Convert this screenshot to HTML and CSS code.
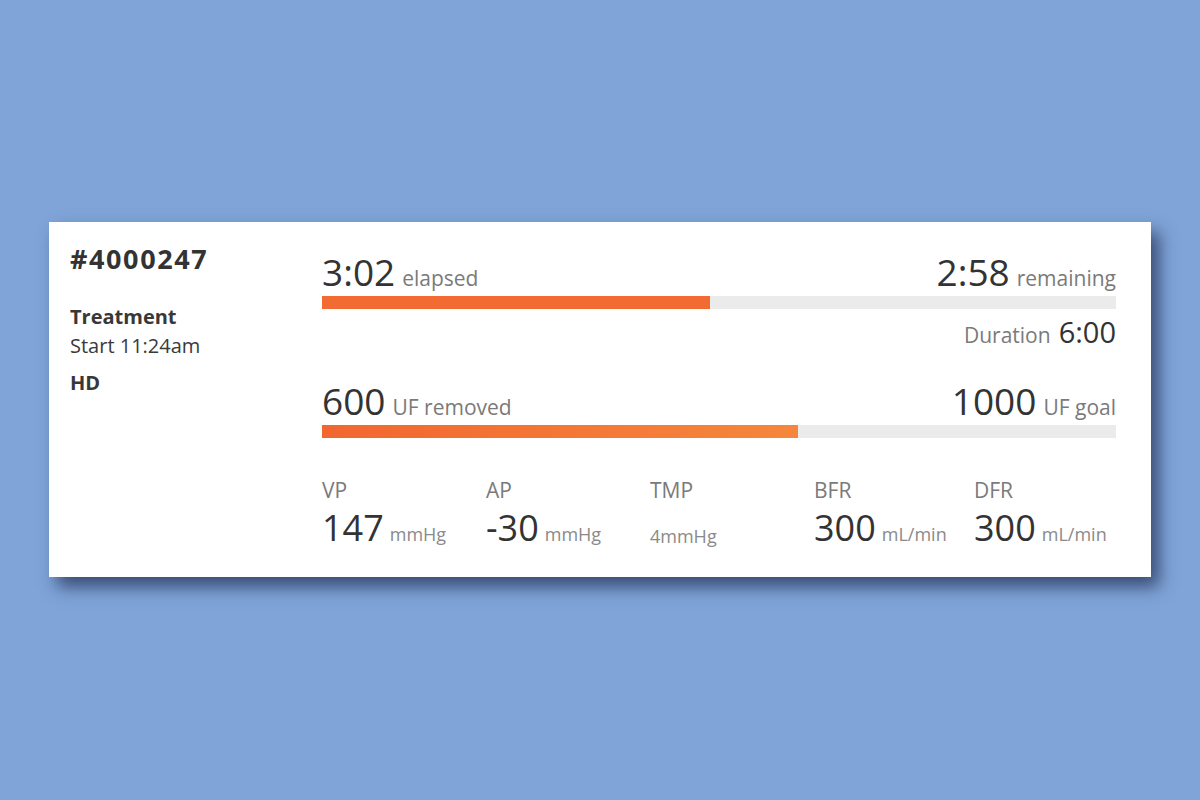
FILE: index.html
```html
<!DOCTYPE html>
<html>
<head>
<meta charset="utf-8">
<link rel="stylesheet" href="styles.css">
</head>
<body>
<div class="card">
  <div class="left">
    <div class="id">#4000247</div>
    <div class="treat">Treatment</div>
    <div class="start">Start 11:24am</div>
    <div class="mode">HD</div>
  </div>
  <div class="right">
    <div class="row">
      <div><span class="big">3:02</span><span class="lbl">elapsed</span></div>
      <div><span class="big">2:58</span><span class="lbl">remaining</span></div>
    </div>
    <div class="track"><div class="fill" style="width:48.9%"></div></div>
    <div class="dur"><span class="lbl">Duration</span><span class="mid">6:00</span></div>
    <div class="row row2">
      <div><span class="big">600</span><span class="lbl">UF removed</span></div>
      <div><span class="big">1000</span><span class="lbl">UF goal</span></div>
    </div>
    <div class="track"><div class="fill fill2" style="width:60%"></div></div>
    <div class="stats">
      <div class="stat s1"><div class="slabel">VP</div><div class="sval"><span class="big">147</span><span class="unit">mmHg</span></div></div>
      <div class="stat s2"><div class="slabel">AP</div><div class="sval"><span class="big">-30</span><span class="unit">mmHg</span></div></div>
      <div class="stat s3"><div class="slabel">TMP</div><div class="sval"><span class="unit low">4mmHg</span></div></div>
      <div class="stat s4"><div class="slabel">BFR</div><div class="sval"><span class="big">300</span><span class="unit">mL/min</span></div></div>
      <div class="stat s5"><div class="slabel">DFR</div><div class="sval"><span class="big">300</span><span class="unit">mL/min</span></div></div>
    </div>
  </div>
</div>
</body>
</html>
```
FILE: styles.css
```css
html, body { margin: 0; padding: 0; }
body {
  width: 1200px;
  height: 800px;
  background: #80a4d8;
  font-family: "Open Sans", "Lato", sans-serif;
  color: #333;
  padding: 222px 0 0 49px;
  box-sizing: border-box;
  overflow: hidden;
}
.card {
  width: 1102px;
  height: 355px;
  background: #fff;
  box-sizing: border-box;
  display: flex;
  padding: 0 35px 0 21px;
  box-shadow: 8px 10px 16px rgba(25, 40, 75, 0.7);
}
.left { width: 252px; flex: none; padding-top: 21px; }
.id { font-size: 27px; font-weight: 700; color: #333; line-height: 32px; letter-spacing: 1.6px; }
.treat { font-size: 20px; font-weight: 700; margin-top: 30px; line-height: 24px; color: #383838; }
.start { font-size: 20px; line-height: 24px; margin-top: 5px; color: #3a3a3a; }
.mode { font-size: 20px; font-weight: 700; margin-top: 13px; line-height: 24px; color: #383838; }
.right { flex: 1; display: flex; flex-direction: column; }
.row { display: flex; justify-content: space-between; align-items: flex-end; height: 74px; }
.row > div { line-height: 40px; margin-bottom: -4px; }
.row2 { height: 73px; }
.big { font-size: 37px; color: #333; }
.lbl { font-size: 21px; color: #7a7a7a; margin-left: 7px; }
.mid { font-size: 29px; color: #333; margin-left: 8px; }
.track { height: 13px; background: #ebebeb; }
.fill { height: 100%; background: #f26b32; }
.fill2 { background: linear-gradient(90deg, #f26630, #f5873c); }
.dur { text-align: right; margin-top: 8px; line-height: 30px; }
.dur .lbl { margin-left: 0; }
.stats { display: flex; margin-top: 40px; }
.stat { flex: none; }
.s1, .s2, .s3 { width: 164px; }
.s4 { width: 160px; }
.slabel { font-size: 21px; color: #7a7a7a; line-height: 24px; }
.sval { margin-top: 6px; line-height: 40px; }
.sval .big { font-size: 36px; }
.unit { font-size: 18px; color: #8a8a8a; margin-left: 6px; }
.unit.low { margin-left: 0; position: relative; top: 8px; }
```
